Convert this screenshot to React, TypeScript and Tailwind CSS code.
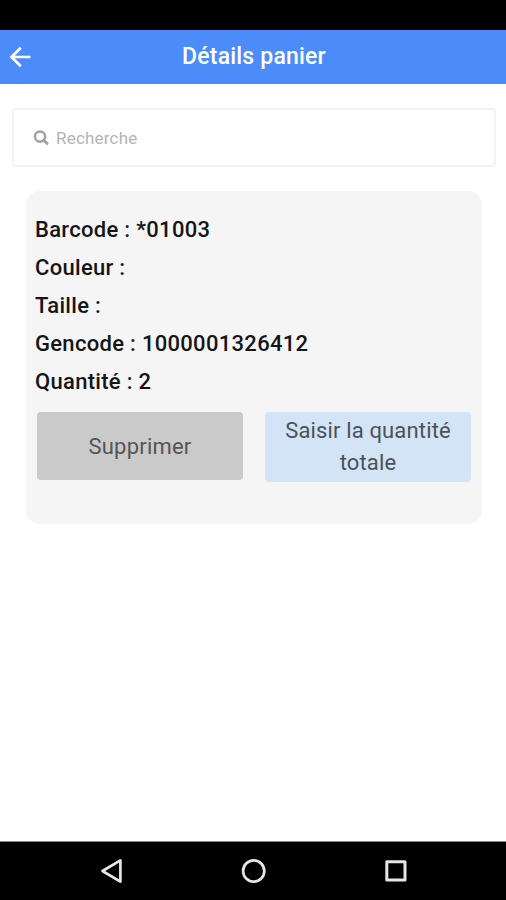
import React, { useState } from 'react'

const details = [
  { label: 'Barcode', value: '*01003' },
  { label: 'Couleur', value: '' },
  { label: 'Taille', value: '' },
  { label: 'Gencode', value: '1000001326412' },
  { label: 'Quantité', value: '2' },
]

const Header = () => {
  return (
    <header className="h-[54px] w-full bg-[#4c8cf8] grid grid-cols-[60px_1fr_60px] items-center">
      <button className="pl-[9px] cursor-pointer" aria-label="Retour">
        <svg width="22" height="22" viewBox="0 0 22 22" fill="none" stroke="white" strokeWidth="2.7">
          <path d="M21.4 11H3M11.8 1.7L2.5 11l9.3 9.3" />
        </svg>
      </button>
      <h1 className="pl-[2px] text-center text-[23px] leading-[54px] tracking-[0.2px] font-medium text-white">Détails panier</h1>
    </header>
  )
}

const NavBar = () => {
  return (
    <nav className="h-[59px] w-full bg-black border-t border-[#8a8a8a]">
      <svg width="506" height="58" viewBox="0 0 506 58" fill="none" stroke="#e6e6e6" strokeWidth="2.7" strokeLinejoin="round">
        <path d="M120.4 18.4v21.2L102.5 29z" />
        <circle cx="253.7" cy="29" r="10.6" />
        <rect x="386.8" y="19.8" width="18.2" height="18.2" strokeWidth="3" />
      </svg>
    </nav>
  )
}

const App = () => {
  const [search, setSearch] = useState<string>('')

  return (
    <div className="w-[506px] h-[900px] flex flex-col bg-white overflow-hidden font-['Roboto',sans-serif]">
      <div className="h-[30px] bg-black shrink-0"></div>
      <Header />
      <main className="flex-1 pt-[24px]">
        <label className="ml-[12px] mr-[10px] h-[59px] pl-[19px] flex items-center gap-[7px] border-2 border-[#f3f3f3] rounded-[4px]">
          <svg width="16" height="16" viewBox="0 0 16 16" fill="none" stroke="#a3a3a3">
            <circle cx="7" cy="6.6" r="5.1" strokeWidth="2.5" />
            <path d="M10.8 10.4l3.2 3" strokeWidth="3" strokeLinecap="round" />
          </svg>
          <input
            type="text"
            value={search}
            onChange={(e) => setSearch(e.target.value)}
            placeholder="Recherche"
            className="flex-1 pt-[3px] text-[17px] tracking-[0.2px] font-normal outline-none text-[#444] placeholder:text-[#b4b4b4]"
          />
        </label>

        <section className="mt-[24px] ml-[26px] mr-[24px] h-[333px] pt-[19px] px-[9px] bg-[#f5f5f5] rounded-[14px]">
          <ul>
            {details.map((item) => (
              <li key={item.label} className="h-[38px] leading-[39px] text-[22px] tracking-[0.3px] font-medium text-[#151515]">
                {item.label} : {item.value}
              </li>
            ))}
          </ul>
          <div className="mt-[12px] pl-[2px] flex items-start gap-[22px]">
            <button className="w-[206px] h-[68px] bg-[#cacaca] rounded-[4px] text-[22px] tracking-[0.2px] text-[#555] cursor-pointer">Supprimer</button>
            <button className="w-[206px] h-[70px] bg-[#d4e4f7] rounded-[4px] text-[22px] leading-[32px] tracking-[0.15px] text-[#4b5158] cursor-pointer">
              Saisir la quantité totale
            </button>
          </div>
        </section>
      </main>
      <NavBar />
    </div>
  )
}

export default App
